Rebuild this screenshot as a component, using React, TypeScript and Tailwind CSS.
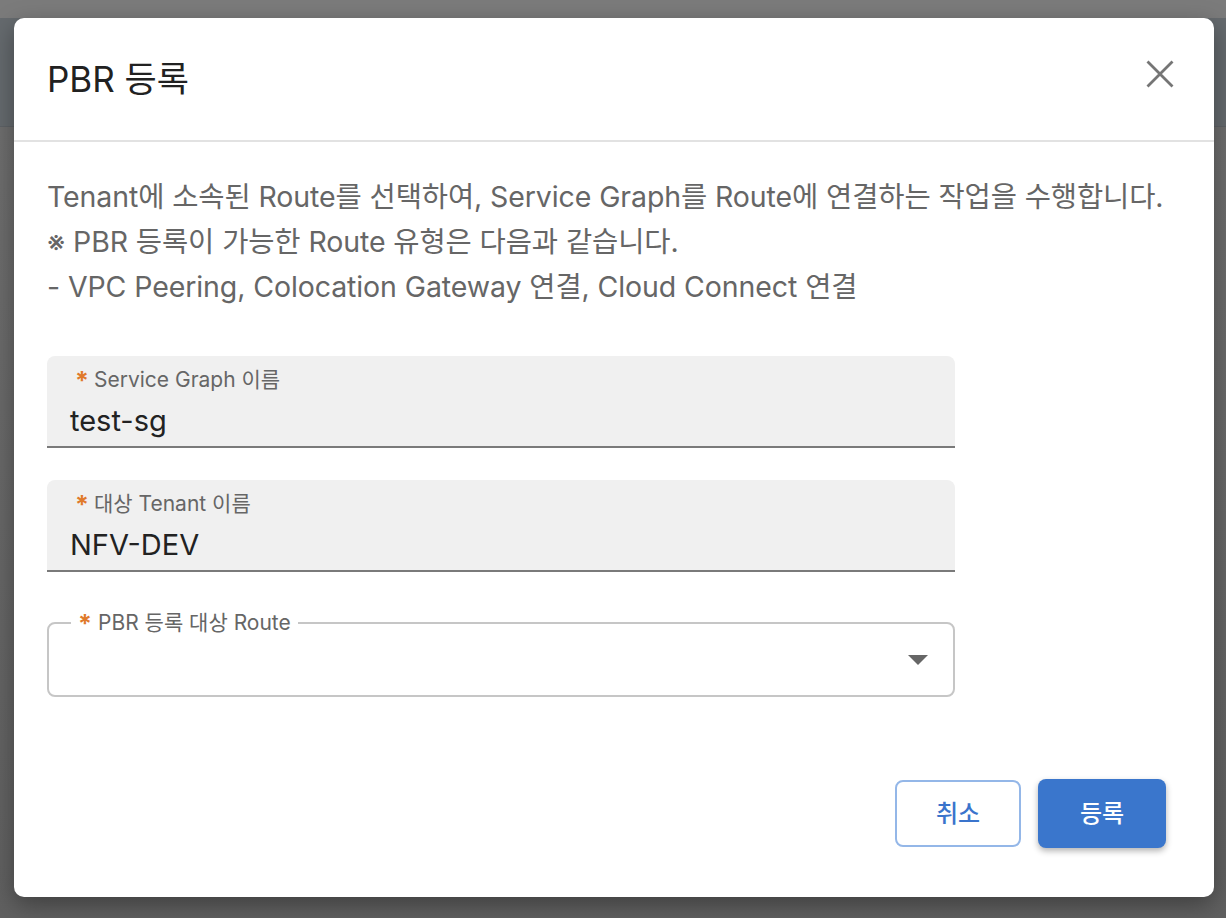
import React from "react";

const font = { fontFamily: "Inter, 'Noto Sans CJK KR', sans-serif" };

function FilledField({ label, value }: { label: string; value: string }) {
  return (
    <div className="w-[908px] rounded-t-[8px] bg-[#f0f0f0] border-b-2 border-[#7a7a7a] pl-[23px] pt-[12px] pb-[7px]">
      <div className="flex items-center h-[24px] pl-[5px] text-[21px] leading-[24px] text-[#666]">
        <span className="text-[#e07a2a] font-bold mr-[5px] text-[25px] leading-[24px] mt-[2px]">*</span>
        <span>{label}</span>
      </div>
      <div className="mt-[11px] h-[36px] text-[29px] leading-[36px] text-[#222]">{value}</div>
    </div>
  );
}

export default function App() {
  return (
    <div className="relative w-full h-[918px] bg-[#6c6c6c] overflow-hidden" style={font}>
      {/* page behind the dim layer */}
      <div className="h-[18px] bg-[#7b7b7b]" />
      <div className="h-[109px] bg-[#656a6e] border-b border-[#5e6266]" />
      <div className="h-[791px] bg-gradient-to-b from-[#6e6e6e] to-[#606060]" />

      {/* modal */}
      <div className="absolute left-[14px] top-[18px] w-[1200px] h-[879px] bg-white rounded-[10px] shadow-[0_8px_24px_rgba(0,0,0,0.35)] flex flex-col">
        <div className="h-[124px] flex items-center justify-between pl-[33px] pr-[40px] border-b-2 border-[#e2e2e2] shrink-0">
          <h2 className="text-[35px] leading-[44px] text-[#212121] font-normal">PBR 등록</h2>
          <button className="w-[28px] h-[28px] flex items-center justify-center -mt-[10px]">
            <svg width="28" height="28" viewBox="0 0 28 28">
              <path d="M1.5 1.5 L26.5 26.5 M26.5 1.5 L1.5 26.5" stroke="#757575" strokeWidth="2.8" fill="none" />
            </svg>
          </button>
        </div>

        <div className="flex-1 flex flex-col px-[33px] pt-[32px]">
          <div className="text-[28.5px] leading-[45px] text-[#666] whitespace-nowrap tracking-[-0.1px]">
            <p>Tenant에 소속된 Route를 선택하여, Service Graph를 Route에 연결하는 작업을 수행합니다.</p>
            <p>※ PBR 등록이 가능한 Route 유형은 다음과 같습니다.</p>
            <p>- VPC Peering, Colocation Gateway 연결, Cloud Connect 연결</p>
          </div>

          <div className="mt-[47px] flex flex-col">
            <FilledField label="Service Graph 이름" value="test-sg" />
            <div className="h-[32px]" />
            <FilledField label="대상 Tenant 이름" value="NFV-DEV" />
          </div>

          <div className="relative mt-[50px] w-[908px] h-[75px] rounded-[8px] border-2 border-[#c6c6c6] flex items-center justify-end pr-[25px]">
            <div className="absolute left-[22px] -top-[14px] bg-white px-[7px] h-[26px] flex items-center text-[21px] leading-[24px] text-[#666]">
              <span className="text-[#e07a2a] font-bold mr-[6px] text-[25px] leading-[24px] mt-[2px]">*</span>
              <span>PBR 등록 대상 Route</span>
            </div>
            <svg width="20" height="10" viewBox="0 0 20 10">
              <path d="M0 0 L20 0 L10 10 Z" fill="#666" />
            </svg>
          </div>

          <div className="mt-auto mb-[49px] flex justify-end gap-[17px] pr-[15px]">
            <button className="w-[126px] h-[67px] rounded-[8px] border-2 border-[#94b7e8] bg-white text-[24px] font-medium text-[#3a74cc] mt-[1px]">
              취소
            </button>
            <button className="w-[128px] h-[69px] rounded-[8px] bg-[#3a76cc] text-white text-[24px] font-medium shadow-[0_3px_6px_rgba(0,0,0,0.3)]">
              등록
            </button>
          </div>
        </div>
      </div>
    </div>
  );
}
